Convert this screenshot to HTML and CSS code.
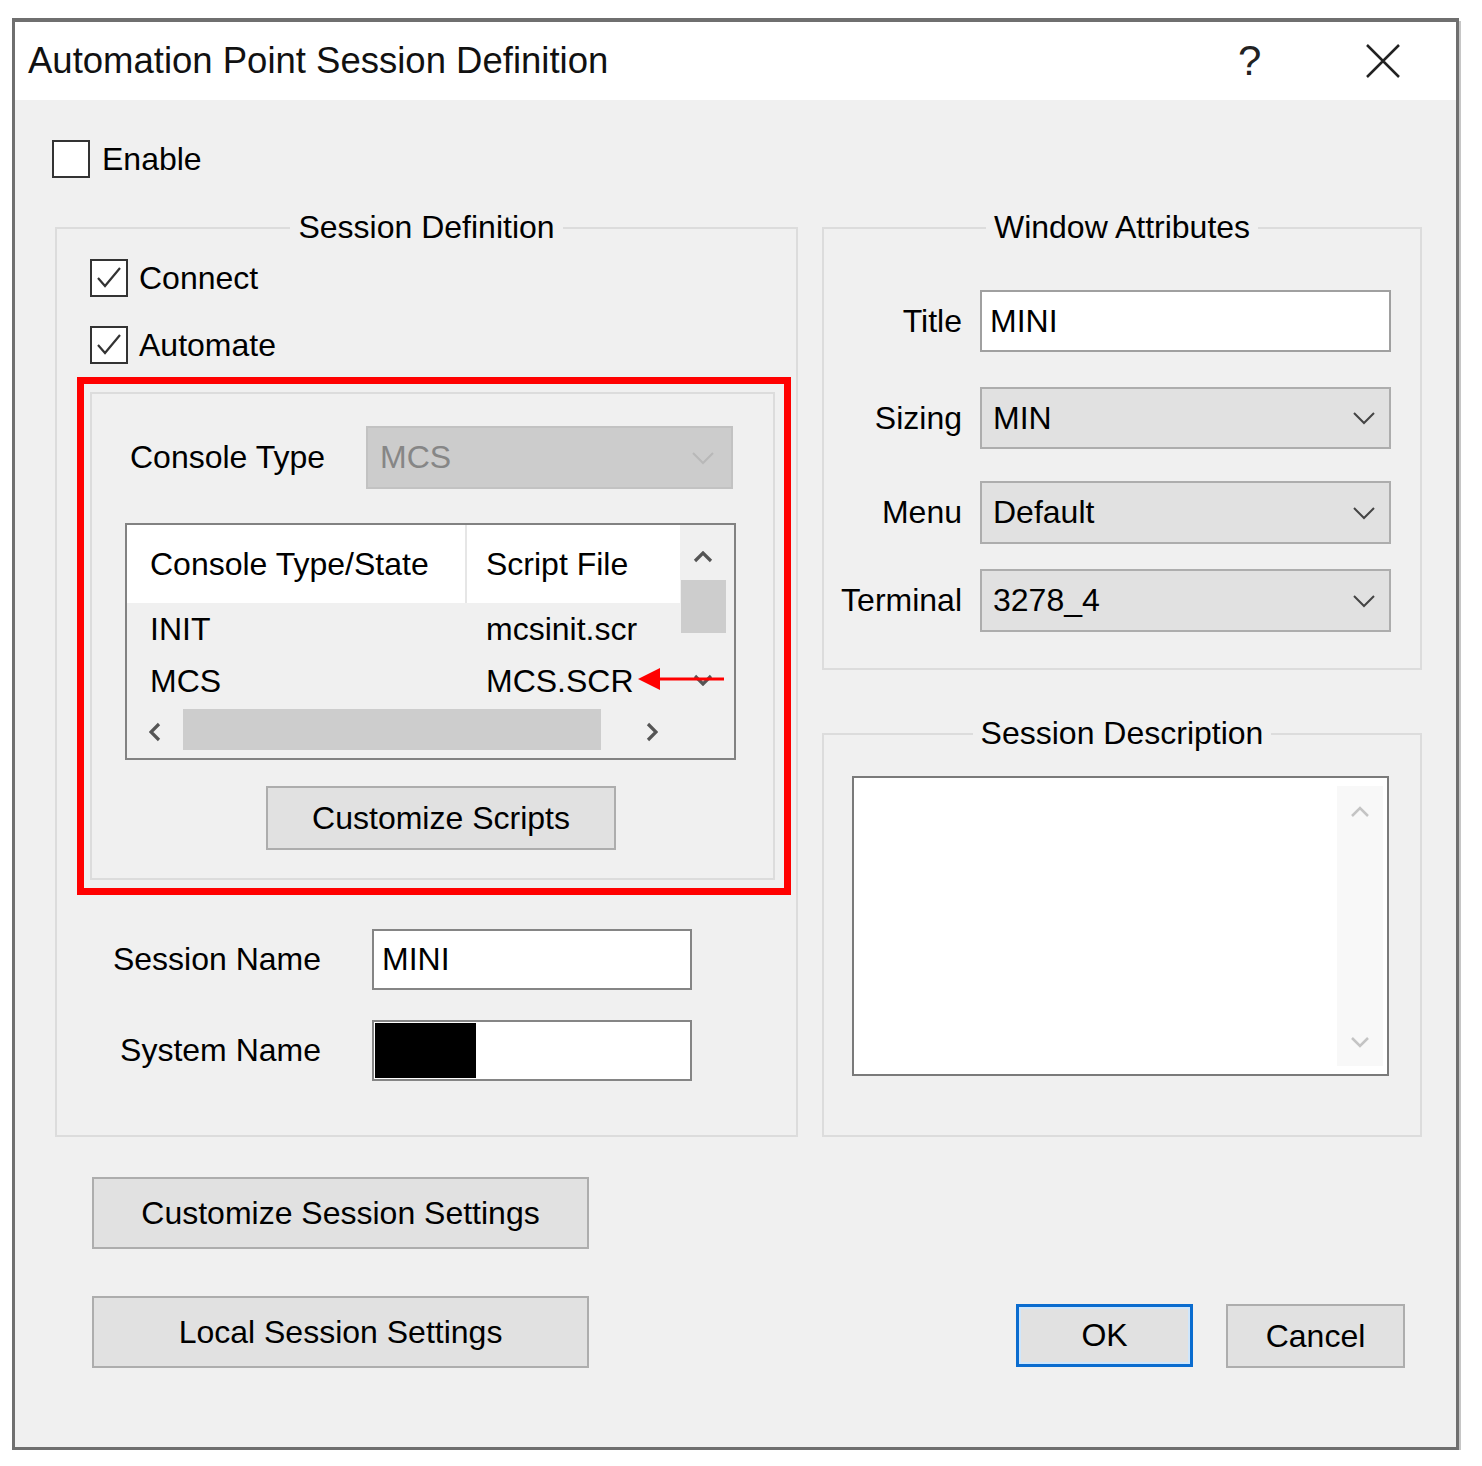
FILE: index.html
```html
<!DOCTYPE html>
<html>
<head>
<meta charset="utf-8">
<title>Automation Point Session Definition</title>
<link rel="stylesheet" href="styles.css">
</head>
<body>
<div class="window">
  <div class="titlebar">
    <span class="title">Automation Point Session Definition</span>
    <span class="help">?</span>
    <svg class="close" width="34" height="34" viewBox="0 0 34 34"><path d="M1 1 L33 33 M33 1 L1 33" stroke="#222" stroke-width="2.5" fill="none"/></svg>
  </div>
  <div class="content">
    <div class="check enable"><span class="box"></span><span>Enable</span></div>

    <div class="groups">
      <section class="group sess-def">
        <div class="group-head"><span>Session Definition</span></div>
        <div class="group-body left-body">
          <div class="check connect"><span class="box"><svg width="34" height="34" viewBox="0 0 34 34"><polyline points="6,17 13,25 28,7" fill="none" stroke="#333" stroke-width="2.2"/></svg></span><span>Connect</span></div>
          <div class="check automate"><span class="box"><svg width="34" height="34" viewBox="0 0 34 34"><polyline points="6,17 13,25 28,7" fill="none" stroke="#333" stroke-width="2.2"/></svg></span><span>Automate</span></div>

          <div class="highlight">
            <div class="inner-group">
              <div class="console-row">
                <span class="console-label">Console Type</span>
                <div class="combo disabled"><span>MCS</span><svg width="22" height="14" viewBox="0 0 22 14"><polyline points="1,2 11,12 21,2" fill="none" stroke="#b8b8b8" stroke-width="2"/></svg></div>
              </div>
              <div class="listview">
                <div class="lv-main">
                  <div class="lv-row lv-header"><span class="c1">Console Type/State</span><span class="c2">Script File</span></div>
                  <div class="lv-row"><span class="c1">INIT</span><span class="c2">mcsinit.scr</span></div>
                  <div class="lv-row"><span class="c1">MCS</span><span class="c2">MCS.SCR</span></div>
                </div>
                <div class="vscroll">
                  <div class="vs-up"><svg width="20" height="12" viewBox="0 0 20 12"><polyline points="2,10 10,2 18,10" fill="none" stroke="#555" stroke-width="3.2"/></svg></div>
                  <div class="vs-thumb"></div>
                  <div class="vs-space"></div>
                  <div class="vs-down"><svg width="20" height="12" viewBox="0 0 20 12"><polyline points="2,2 10,10 18,2" fill="none" stroke="#555" stroke-width="3.2"/></svg></div>
                </div>
                <div class="hscroll">
                  <div class="hs-btn"><svg width="12" height="20" viewBox="0 0 12 20"><polyline points="10,2 2,10 10,18" fill="none" stroke="#555" stroke-width="3.2"/></svg></div>
                  <div class="hs-thumb"></div>
                  <div class="hs-space"></div>
                  <div class="hs-btn"><svg width="12" height="20" viewBox="0 0 12 20"><polyline points="2,2 10,10 2,18" fill="none" stroke="#555" stroke-width="3.2"/></svg></div>
                </div>
                <div class="lv-corner"></div>
              </div>
              <div class="btn scripts">Customize Scripts</div>
            </div>
            <svg class="red-arrow" width="86" height="24" viewBox="0 0 86 24"><polygon points="0,12 22,1 22,23" fill="#ff0000"/><line x1="20" y1="12" x2="86" y2="12" stroke="#ff0000" stroke-width="3"/></svg>
          </div>

          <div class="names">
            <span class="flabel">Session Name</span>
            <div class="textbox"><span>MINI</span></div>
            <span class="flabel">System Name</span>
            <div class="textbox"><span class="masked"></span></div>
          </div>
        </div>
      </section>

      <div class="right-col">
        <section class="group win-attr">
          <div class="group-head"><span>Window Attributes</span></div>
          <div class="group-body wa-body">
            <div class="wa-row r-title"><span class="flabel">Title</span><div class="textbox wide"><span>MINI</span></div></div>
            <div class="wa-row r-sizing"><span class="flabel">Sizing</span><div class="combo"><span>MIN</span><svg width="22" height="14" viewBox="0 0 22 14"><polyline points="1,2 11,12 21,2" fill="none" stroke="#444" stroke-width="2"/></svg></div></div>
            <div class="wa-row r-menu"><span class="flabel">Menu</span><div class="combo"><span>Default</span><svg width="22" height="14" viewBox="0 0 22 14"><polyline points="1,2 11,12 21,2" fill="none" stroke="#444" stroke-width="2"/></svg></div></div>
            <div class="wa-row r-term"><span class="flabel">Terminal</span><div class="combo"><span>3278_4</span><svg width="22" height="14" viewBox="0 0 22 14"><polyline points="1,2 11,12 21,2" fill="none" stroke="#444" stroke-width="2"/></svg></div></div>
          </div>
        </section>
        <section class="group sess-desc">
          <div class="group-head"><span>Session Description</span></div>
          <div class="group-body sd-body">
            <div class="textarea">
              <div class="ta-scroll">
                <svg width="20" height="12" viewBox="0 0 20 12"><polyline points="2,10 10,2 18,10" fill="none" stroke="#c4c4c4" stroke-width="2.5"/></svg>
                <svg width="20" height="12" viewBox="0 0 20 12"><polyline points="2,2 10,10 18,2" fill="none" stroke="#c4c4c4" stroke-width="2.5"/></svg>
              </div>
            </div>
          </div>
        </section>
      </div>
    </div>

    <div class="actions">
      <div class="left-actions">
        <div class="btn big">Customize Session Settings</div>
        <div class="btn big">Local Session Settings</div>
      </div>
      <div class="right-actions">
        <div class="btn ok">OK</div>
        <div class="btn cancel">Cancel</div>
      </div>
    </div>
  </div>
</div>
</body>
</html>
```
FILE: styles.css
```css
* { box-sizing: border-box; }
html, body { margin: 0; padding: 0; background: #fff; }
body {
  font-family: "Liberation Sans", Arial, sans-serif;
  font-size: 32px;
  color: #000;
}

.window {
  margin: 18px 0 0 12px;
  width: 1447px;
  height: 1432px;
  border: 3px solid #6f6f6f;
  border-top-width: 4px;
  background: #f0f0f0;
  display: flex;
  flex-direction: column;
  box-shadow: 2px 3px 0 #c6c6c6;
}

.titlebar {
  height: 78px;
  flex: none;
  background: #fff;
  display: flex;
  align-items: center;
  padding-left: 13px;
}
.title { flex: 1; font-size: 36.5px; color: #111; }
.help { width: 22px; margin-right: 106px; font-size: 42px; color: #222; line-height: 1; }
.close { margin-right: 56px; display: block; }

.content { flex: 1; display: flex; flex-direction: column; }

.check { display: flex; align-items: center; gap: 11px; height: 38px; }
.box {
  width: 38px; height: 38px;
  border: 2px solid #333;
  background: #fff;
  display: flex;
}
.enable { margin: 40px 0 0 37px; gap: 12px; }

.groups {
  margin: 32px 0 0 40px;
  display: grid;
  grid-template-columns: 743px 600px;
  column-gap: 24px;
}

.group { display: flex; flex-direction: column; }
.group-head { display: flex; height: 34px; line-height: 34px; flex: none; }
.group-head::before, .group-head::after {
  content: "";
  flex: 1;
  margin-top: 17px;
  border-top: 2px solid #dcdcdc;
}
.group-head::before { border-left: 2px solid #dcdcdc; }
.group-head::after { border-right: 2px solid #dcdcdc; }
.group-head span { padding: 0 8px; white-space: nowrap; }
.group-body { flex: 1; border: 2px solid #dcdcdc; border-top: none; }

.left-body { display: flex; flex-direction: column; }
.connect { margin: 15px 0 0 33px; }
.automate { margin: 29px 0 0 33px; }

.highlight {
  position: relative;
  margin: 13px 0 0 20px;
  width: 714px;
  border: 7px solid #ff0000;
  padding: 8px 9px 8px 6px;
}
.inner-group {
  height: 488px;
  border: 2px solid #dcdcdc;
  display: flex;
  flex-direction: column;
}
.console-row {
  margin-top: 32px;
  display: grid;
  grid-template-columns: 274px 367px;
  height: 63px;
  align-items: center;
}
.console-label { padding-left: 38px; }

.combo {
  height: 100%;
  background: #e1e1e1;
  border: 2px solid #adadad;
  display: flex;
  align-items: center;
  justify-content: space-between;
  padding: 0 14px 0 11px;
}
.combo.disabled { background: #cccccc; border-color: #c2c2c2; color: #868686; padding-left: 12px; padding-right: 17px; }

.listview {
  margin: 34px 0 0 33px;
  width: 611px;
  height: 237px;
  border: 2px solid #828282;
  display: grid;
  grid-template-columns: 553px 54px;
  grid-template-rows: 180px 53px;
  background: #f0f0f0;
}
.lv-main { overflow: hidden; }
.lv-row { display: flex; height: 52px; align-items: center; }
.lv-header { height: 78px; background: #fff; }
.lv-row .c1 { width: 340px; padding-left: 23px; }
.lv-row .c2 { padding-left: 19px; }
.lv-header .c1 { border-right: 2px solid #e6e6e6; height: 100%; display: flex; align-items: center; }

.vscroll {
  display: flex;
  flex-direction: column;
  padding-right: 8px;
  background: #f0f0f0;
}
.vs-up { height: 55px; padding-top: 8px; display: flex; align-items: center; justify-content: center; }
.vs-thumb { height: 53px; background: #cdcdcd; margin-left: 1px; }
.vs-space { height: 22px; }
.vs-down { height: 50px; display: flex; align-items: center; justify-content: center; }

.hscroll {
  display: flex;
  align-items: flex-start;
  padding-top: 4px;
  background: #f0f0f0;
}
.hs-btn { width: 56px; height: 45px; display: flex; align-items: center; justify-content: center; }
.hs-thumb { width: 418px; height: 41px; background: #cdcdcd; }
.hs-space { width: 23px; }
.lv-corner { background: #f0f0f0; }

.btn {
  background: #e1e1e1;
  border: 2px solid #adadad;
  display: flex;
  align-items: center;
  justify-content: center;
}
.scripts { margin: 26px 0 0 174px; width: 350px; height: 64px; }

.red-arrow { position: absolute; left: 554px; top: 283px; display: block; }

.names {
  margin-top: 34px;
  display: grid;
  grid-template-columns: 264px 320px;
  grid-auto-rows: 61px;
  column-gap: 51px;
  row-gap: 30px;
  align-items: center;
}
.flabel { text-align: right; white-space: nowrap; }
.textbox {
  height: 100%;
  background: #fff;
  border: 2px solid #858585;
  display: flex;
  align-items: center;
  padding-left: 8px;
}
.masked { width: 101px; height: 55px; background: #000; margin-left: -7px; }

.right-col { display: flex; flex-direction: column; }
.win-attr { height: 460px; flex: none; }
.wa-body { padding-top: 46px; }
.wa-row {
  display: grid;
  grid-template-columns: 138px 411px;
  column-gap: 18px;
  align-items: center;
  height: 62px;
}
.r-sizing { margin-top: 35px; }
.r-menu { margin-top: 32px; height: 63px; }
.r-term { margin-top: 25px; height: 63px; }
.textbox.wide { border-color: #a0a0a0; }

.sess-desc { margin-top: 46px; flex: 1; }
.sd-body { padding: 26px 0 59px 28px; }
.textarea {
  width: 537px;
  height: 300px;
  background: #fff;
  border: 2px solid #7a7a7a;
  display: flex;
  justify-content: flex-end;
  padding: 8px 4px 8px 0;
}
.ta-scroll {
  width: 46px;
  background: #f8f8f8;
  display: flex;
  flex-direction: column;
  justify-content: space-between;
  align-items: center;
  padding: 20px 0 18px;
}

.actions {
  display: flex;
  justify-content: space-between;
  align-items: flex-end;
  margin: 40px 51px 0 77px;
}
.left-actions { display: flex; flex-direction: column; gap: 47px; }
.btn.big { width: 497px; height: 72px; }
.right-actions { display: flex; gap: 33px; }
.btn.ok { width: 177px; height: 63px; border: 3px solid #0a6ccf; box-shadow: inset 0 0 0 2px #cfe6fb; }
.btn.cancel { width: 179px; height: 64px; }
```
